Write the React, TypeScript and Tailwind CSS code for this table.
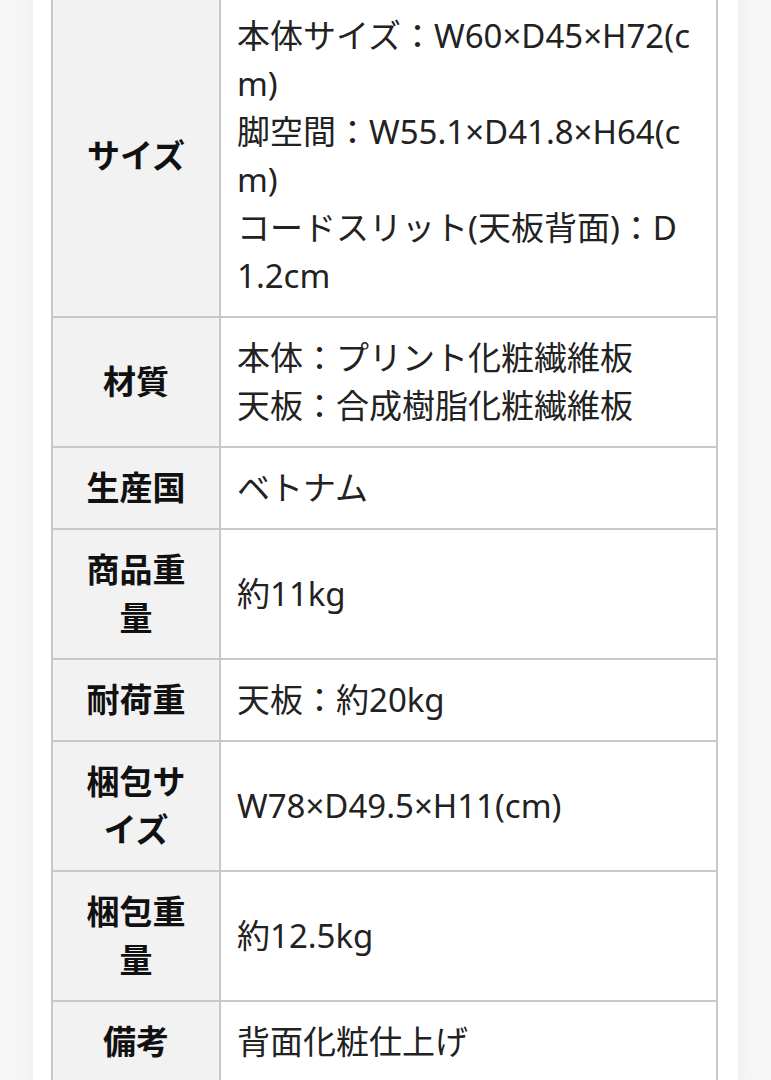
import React from "react";

const rows: { h: string; v: string[] }[] = [
  {
    h: "サイズ",
    v: [
      "本体サイズ：W60×D45×H72(cm)",
      "脚空間：W55.1×D41.8×H64(cm)",
      "コードスリット(天板背面)：D1.2cm",
    ],
  },
  { h: "材質", v: ["本体：プリント化粧繊維板", "天板：合成樹脂化粧繊維板"] },
  { h: "生産国", v: ["ベトナム"] },
  { h: "商品重量", v: ["約11kg"] },
  { h: "耐荷重", v: ["天板：約20kg"] },
  { h: "梱包サイズ", v: ["W78×D49.5×H11(cm)"] },
  { h: "梱包重量", v: ["約12.5kg"] },
  { h: "備考", v: ["背面化粧仕上げ"] },
];

export default function App() {
  return (
    <div
      className="min-h-screen w-full bg-[#f6f6f6] overflow-hidden"
      style={{ fontFamily: '"Noto Sans", "Noto Sans CJK JP", sans-serif' }}
    >
      <div className="ml-[33px] w-[705px] min-h-screen bg-white shadow-[0_0_14px_rgba(0,0,0,0.05)] pl-[18px] pr-[20px]">
        <div className="-mt-[6px] border-l-2 border-r-2 border-[#cbc7c7]">
          {rows.map((r, i) => (
            <div key={i} className="flex border-t-2 border-[#cbc7c7]">
              <div className="w-[168px] shrink-0 border-r-2 border-[#cbc7c7] bg-[#f2f2f2] px-5 py-4 flex items-center justify-center text-center text-[33px] leading-[48px] font-bold text-[#111]">
                {r.h}
              </div>
              <div className="flex-1 px-4 py-4 text-[33px] leading-[48px] text-[#222] break-all flex flex-col justify-center">
                {r.v.map((t, j) => (
                  <div key={j}>{t}</div>
                ))}
              </div>
            </div>
          ))}
        </div>
      </div>
    </div>
  );
}
